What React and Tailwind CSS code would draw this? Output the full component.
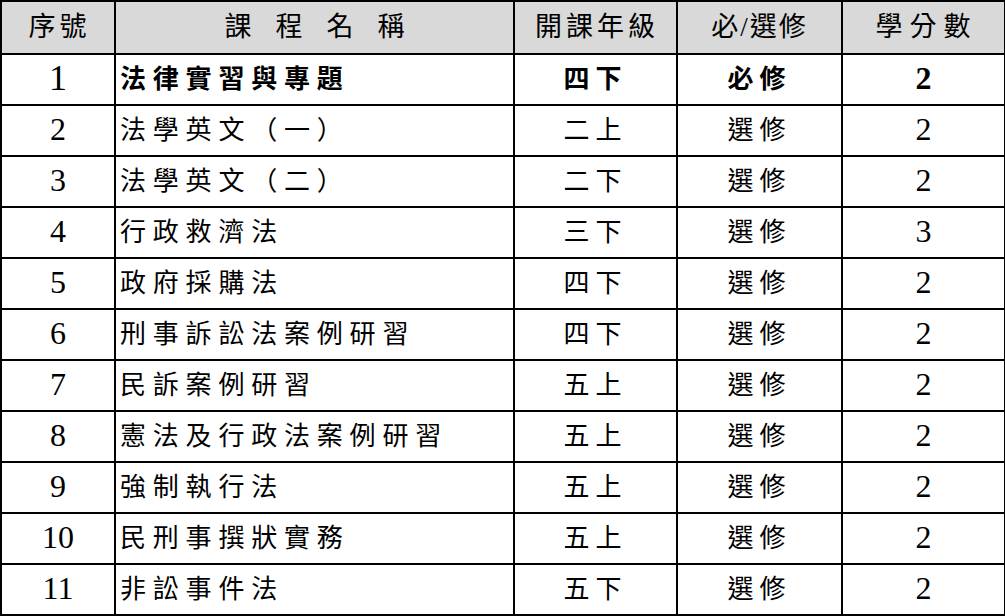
const rows = [
  ['1', '法律實習與專題', '四下', '必修', '2', true],
  ['2', '法學英文（一）', '二上', '選修', '2'],
  ['3', '法學英文（二）', '二下', '選修', '2'],
  ['4', '行政救濟法', '三下', '選修', '3'],
  ['5', '政府採購法', '四下', '選修', '2'],
  ['6', '刑事訴訟法案例研習', '四下', '選修', '2'],
  ['7', '民訴案例研習', '五上', '選修', '2'],
  ['8', '憲法及行政法案例研習', '五上', '選修', '2'],
  ['9', '強制執行法', '五上', '選修', '2'],
  ['10', '民刑事撰狀實務', '五上', '選修', '2'],
  ['11', '非訟事件法', '五下', '選修', '2'],
];

const font = { fontFamily: '"Liberation Serif", "Noto Sans CJK TC", serif' };

export default function App() {
  return (
    <div className="w-[1005px] h-[616px] bg-white text-black" style={font}>
      <table className="border-collapse table-fixed w-[1004px] leading-none">
        <colgroup>
          <col className="w-[114px]" />
          <col className="w-[399px]" />
          <col className="w-[163px]" />
          <col className="w-[165px]" />
          <col className="w-[163px]" />
        </colgroup>
        <thead>
          <tr className="h-[53px] bg-[#d9d9d9] text-[27px]">
            <th className="border-2 border-black font-normal tracking-[4px] pl-[3px]">序號</th>
            <th className="border-2 border-black font-normal tracking-[24px] pl-[24px]">課程名稱</th>
            <th className="border-2 border-black font-normal tracking-[4px] pl-[3px]">開課年級</th>
            <th className="border-2 border-black font-normal tracking-[2px]">必/選修</th>
            <th className="border-2 border-black font-normal tracking-[7px] pl-[6px]">學分數</th>
          </tr>
        </thead>
        <tbody>
          {rows.map(([n, name, yr, type, cr, bold]) => (
            <tr key={n} className={`h-[51px] ${bold ? 'font-bold' : 'font-normal'}`}>
              <td className={`border-2 border-black text-center font-normal p-0 pb-[3px] ${bold ? 'text-[36px]' : 'text-[32px]'}`}>{n}</td>
              <td className="border-2 border-black text-left p-0 pl-[4px] text-[26px] tracking-[6.8px] whitespace-nowrap">{name}</td>
              <td className="border-2 border-black text-center p-0 text-[26px] tracking-[6px]">{yr}</td>
              <td className="border-2 border-black text-center p-0 text-[26px] tracking-[6px]">{type}</td>
              <td className="border-2 border-black text-center p-0 pb-[3px] text-[32px]">{cr}</td>
            </tr>
          ))}
        </tbody>
      </table>
    </div>
  );
}
